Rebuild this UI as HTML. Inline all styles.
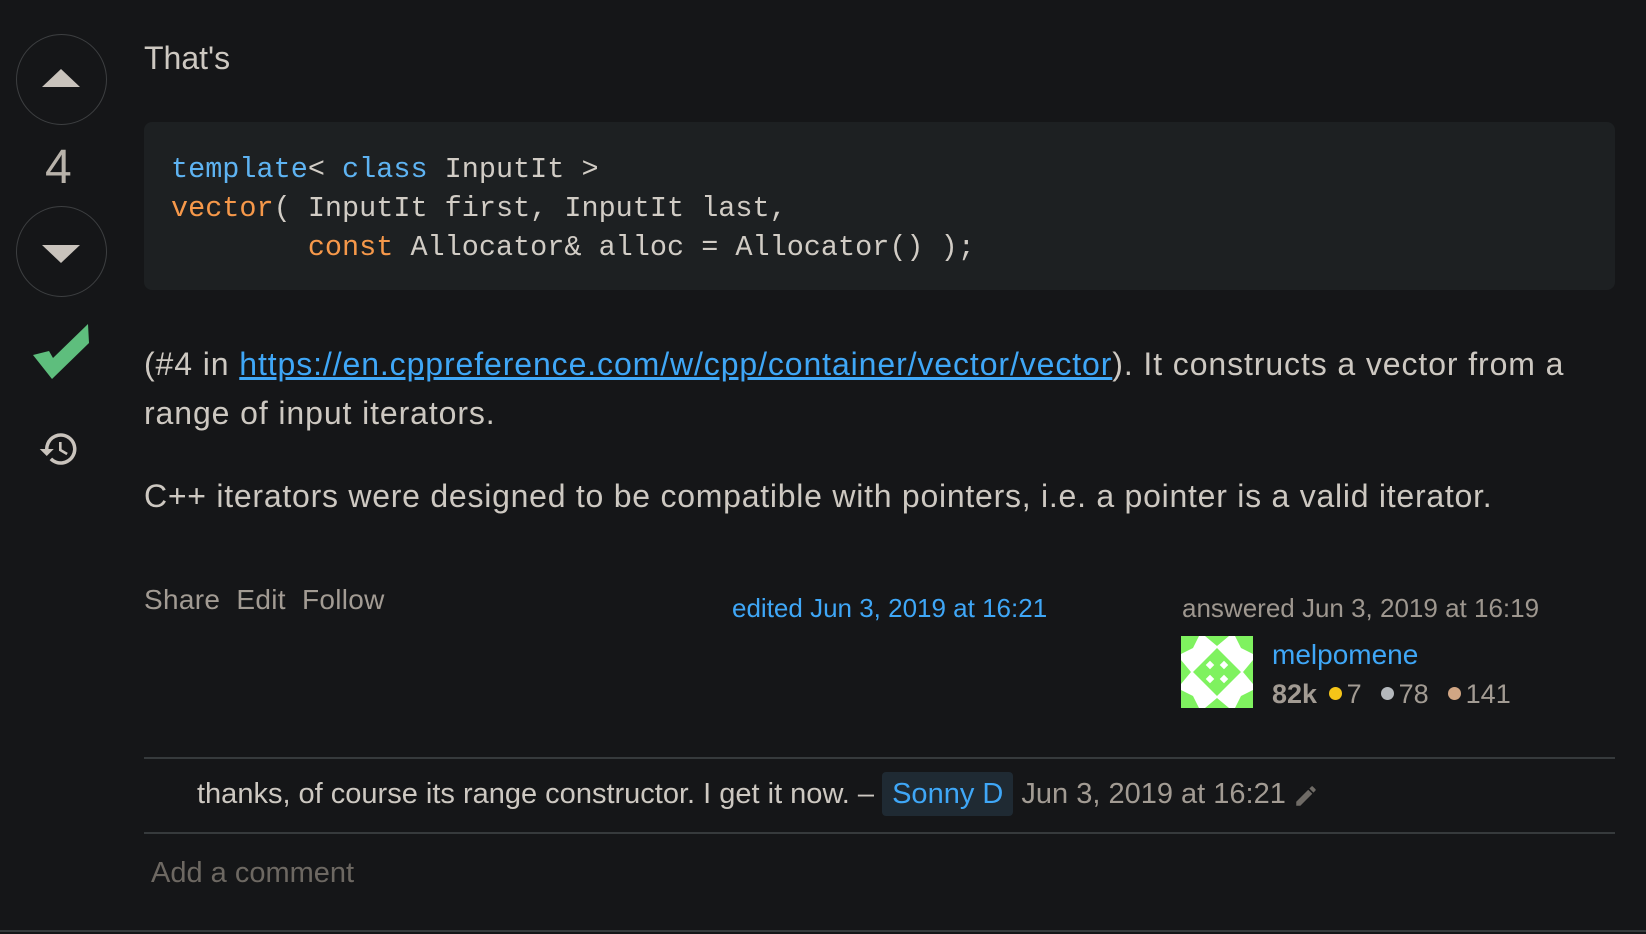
<!DOCTYPE html>
<html><head><meta charset="utf-8"><style>
html,body{margin:0;padding:0}
body{width:1646px;height:934px;background:#151618;position:relative;overflow:hidden;font-family:"Liberation Sans",sans-serif;color:#cdc8c1}
.a{position:absolute;white-space:nowrap}
.circ{position:absolute;left:16px;width:89px;height:89px;border:1.5px solid #3d3f41;border-radius:50%}
.code{position:absolute;left:144px;top:122px;width:1471px;height:168px;background:#1d2022;border-radius:8px}
.mono{font-family:"Liberation Mono",monospace;font-size:28.5px;color:#d1ccc5;white-space:pre}
.k{color:#5eb3f2}.o{color:#f6984a}
a{color:#3fa7f7}
hr{position:absolute;margin:0;border:0;height:2px;background:#363a3c}
.d{display:inline-block;width:13px;height:13px;border-radius:50%;margin:0 5px 0 4px;vertical-align:3px}
</style></head><body>
<div class="circ" style="top:34px"></div>
<svg class="a" style="left:42px;top:69px" width="38" height="20"><polygon points="0,18 19,0 38,18" fill="#c9c3bc"/></svg>
<div class="a" style="left:45px;top:140px;font-size:48px;color:#b8b2aa">4</div>
<div class="circ" style="top:206px"></div>
<svg class="a" style="left:42px;top:245px" width="38" height="20"><polygon points="0,0 38,0 19,18" fill="#c9c3bc"/></svg>
<svg class="a" style="left:33px;top:324px" width="56" height="56"><polygon points="0,31 16,27 20,34 55,0 56,19 19,55" fill="#5ebe7d"/></svg>
<svg class="a" style="left:36px;top:428px" width="46" height="42" viewBox="0 0 24 24"><path d="M13 3a9 9 0 0 0-9 9H1l4 4 4-4H6a7 7 0 1 1 2.05 4.95l-1.42 1.42A9 9 0 1 0 13 3zm-1 5v5l4.25 2.52.77-1.28-3.52-2.09V8z" fill="#c9c3bc"/></svg>

<div class="a" style="left:144px;top:40px;font-size:32px">That's</div>
<div class="code"></div>
<div class="a mono" style="left:171px;top:150px;line-height:39px"><span class="k">template</span>&lt; <span class="k">class</span> InputIt &gt;
<span class="o">vector</span>( InputIt first, InputIt last,
        <span class="o">const</span> Allocator&amp; alloc = Allocator() );</div>

<div class="a" style="left:144px;top:340px;font-size:32px;line-height:49px;letter-spacing:0.9px">(#4 in <a href="#">https://en.cppreference.com/w/cpp/container/vector/vector</a>). It constructs a vector from a<br>range of input iterators.</div>
<div class="a" style="left:144px;top:478px;font-size:32px;letter-spacing:0.75px">C++ iterators were designed to be compatible with pointers, i.e. a pointer is a valid iterator.</div>

<div class="a" style="left:144px;top:584px;font-size:28px;color:#a29b93;letter-spacing:0.3px">Share&nbsp;&nbsp;Edit&nbsp;&nbsp;Follow</div>
<div class="a" style="left:732px;top:593px;font-size:26px;color:#3fa7f7">edited Jun 3, 2019 at 16:21</div>
<div class="a" style="left:1182px;top:593px;font-size:26px;color:#9e978f">answered Jun 3, 2019 at 16:19</div>
<svg class="a" style="left:1181px;top:636px" width="72" height="72" viewBox="0 0 72 72"><rect width="72" height="72" rx="5" fill="#fff"/>
<g fill="#7ff25f"><polygon points="36,12 60,36 36,60 12,36"/><polygon points="0,0 18,0 12,12 0,18"/><polygon points="72,0 54,0 60,12 72,18"/><polygon points="0,72 18,72 12,60 0,54"/><polygon points="72,72 54,72 60,60 72,54"/><polygon points="24,0 48,0 36,10"/><polygon points="24,72 48,72 36,62"/><polygon points="0,24 0,48 10,36"/><polygon points="72,24 72,48 62,36"/></g>
<g fill="#fff"><rect x="26" y="26" width="6" height="6" transform="rotate(45 29 29)"/><rect x="40" y="26" width="6" height="6" transform="rotate(45 43 29)"/><rect x="26" y="40" width="6" height="6" transform="rotate(45 29 43)"/><rect x="40" y="40" width="6" height="6" transform="rotate(45 43 43)"/></g></svg>
<div class="a" style="left:1272px;top:639px;font-size:28px;color:#3fa7f7">melpomene</div>
<div class="a" style="left:1272px;top:679px;font-size:27px;color:#a29b93"><b>82k</b> <span class="d" style="background:#f5c518"></span>7&nbsp; <span class="d" style="background:#b4b8bc"></span>78&nbsp; <span class="d" style="background:#d1a684"></span>141</div>

<hr style="left:144px;top:757px;width:1471px">
<div class="a" style="left:197px;top:778px;font-size:29px;color:#cdc8c1">thanks, of course its range constructor. I get it now. – <span style="background:#1f2a33;color:#3fa7f7;padding:6px 10px;border-radius:4px">Sonny D</span> <span style="color:#a29b93">Jun 3, 2019 at 16:21</span></div>
<svg class="a" style="left:1293px;top:783px" width="26" height="26" viewBox="0 0 24 24"><path d="M3 17.25V21h3.75L17.8 9.94l-3.75-3.75zM20.7 7.04a1 1 0 0 0 0-1.41l-2.34-2.34a1 1 0 0 0-1.41 0l-1.83 1.83 3.75 3.75z" fill="#6f6b66"/></svg>
<hr style="left:144px;top:832px;width:1471px">
<div class="a" style="left:151px;top:857px;font-size:29px;color:#6d6862">Add a comment</div>
<hr style="left:0;top:930px;width:1646px">
</body></html>
